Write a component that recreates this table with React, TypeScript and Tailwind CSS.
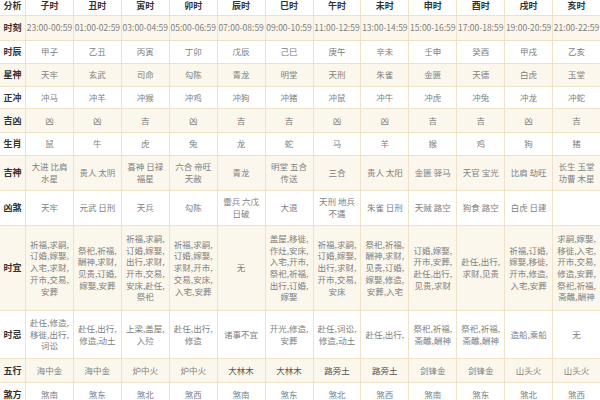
import React from "react";

const hours = ["子时", "丑时", "寅时", "卯时", "辰时", "巳时", "午时", "未时", "申时", "酉时", "戌时", "亥时"];

type Cell = string | string[];

const rows: { label: string; cells: Cell[] }[] = [
  {
    label: "时刻",
    cells: ["23:00-00:59", "01:00-02:59", "03:00-04:59", "05:00-06:59", "07:00-08:59", "09:00-10:59", "11:00-12:59", "13:00-14:59", "15:00-16:59", "17:00-18:59", "19:00-20:59", "21:00-22:59"],
  },
  { label: "时辰", cells: ["甲子", "乙丑", "丙寅", "丁卯", "戊辰", "己巳", "庚午", "辛未", "壬申", "癸酉", "甲戌", "乙亥"] },
  { label: "星神", cells: ["天牢", "玄武", "司命", "勾陈", "青龙", "明堂", "天刑", "朱雀", "金匮", "天德", "白虎", "玉堂"] },
  { label: "正冲", cells: ["冲马", "冲羊", "冲猴", "冲鸡", "冲狗", "冲猪", "冲鼠", "冲牛", "冲虎", "冲兔", "冲龙", "冲蛇"] },
  { label: "吉凶", cells: ["凶", "凶", "吉", "凶", "吉", "吉", "凶", "凶", "吉", "吉", "凶", "吉"] },
  { label: "生肖", cells: ["鼠", "牛", "虎", "兔", "龙", "蛇", "马", "羊", "猴", "鸡", "狗", "猪"] },
  {
    label: "吉神",
    cells: [
      ["大进 比肩", "水星"],
      "贵人 太阴",
      ["喜神 日禄", "福星"],
      ["六合 帝旺", "天赦"],
      "青龙",
      ["明堂 五合", "传送"],
      "三合",
      "贵人 太阳",
      "金匮 驿马",
      "天官 宝光",
      "比肩 劫旺",
      ["长生 玉堂", "功曹 木星"],
    ],
  },
  {
    label: "凶煞",
    cells: [
      "天牢",
      "元武 日刑",
      "天兵",
      "勾陈",
      ["雷兵 六戊", "日破"],
      "大退",
      ["天刑 地兵", "不遇"],
      "朱雀 日刑",
      "天贼 路空",
      "狗食 路空",
      "白虎 日建",
      "",
    ],
  },
  {
    label: "时宜",
    cells: [
      ["祈福,求嗣,", "订婚,嫁娶,", "入宅,求财,", "开市,交易,", "安葬"],
      ["祭祀,祈福,", "酬神,求财,", "见贵,订婚,", "嫁娶,安葬"],
      ["祈福,求嗣,", "订婚,嫁娶,", "出行,求财,", "开市,交易,", "安床,赴任,", "祭祀"],
      ["祈福,求嗣,", "订婚,嫁娶,", "求财,开市,", "交易,安床,", "入宅,安葬"],
      "无",
      ["盖屋,移徙,", "作灶,安床,", "入宅,开市,", "祭祀,祈福,", "出行,订婚,", "嫁娶"],
      ["祈福,求嗣,", "订婚,嫁娶,", "出行,求财,", "开市,交易,", "安床"],
      ["祭祀,祈福,", "酬神,求财,", "见贵,订婚,", "嫁娶,修造,", "安葬,入宅"],
      ["订婚,嫁娶,", "开市,安葬,", "赴任,出行,", "见贵,求财"],
      ["赴任,出行,", "求财,见贵"],
      ["祈福,订婚,", "嫁娶,移徙,", "开市,修造,", "入宅,安葬"],
      ["求嗣,嫁娶,", "移徙,入宅,", "开市,交易,", "修造,安葬,", "祭祀,祈福,", "斋醮,酬神"],
    ],
  },
  {
    label: "时忌",
    cells: [
      ["赴任,修造,", "移徙,出行,", "词讼"],
      ["赴任,出行,", "修造,动土"],
      ["上梁,盖屋,", "入殓"],
      ["赴任,出行,", "修造"],
      "诸事不宜",
      ["开光,修造,", "安葬"],
      ["赴任,词讼,", "修造,动土"],
      "赴任,出行,",
      ["祭祀,祈福,", "斋醮,酬神"],
      ["祭祀,祈福,", "斋醮,酬神"],
      "造船,乘船",
      "无",
    ],
  },
  {
    label: "五行",
    cells: ["海中金", "海中金", "炉中火", "炉中火", "大林木", "大林木", "路旁土", "路旁土", "剑锋金", "剑锋金", "山头火", "山头火"],
  },
  { label: "煞方", cells: ["煞南", "煞东", "煞北", "煞西", "煞南", "煞东", "煞北", "煞西", "煞南", "煞东", "煞北", "煞西"] },
];

const font = { fontFamily: '"Noto Sans CJK SC", "Liberation Sans", sans-serif' };

export default function App() {
  return (
    <div className="w-[600px] h-[400px] overflow-hidden bg-white" style={font}>
      <div className="mt-[-4px] grid grid-cols-[25px_repeat(12,minmax(0,1fr))] grid-rows-[19px_24px_22px_22px_21px_23px_22px_34px_34px_84px_47px_23px_24px] gap-px bg-[#eee3c6]">
        <div className="flex items-center justify-center bg-white text-[9px] font-bold text-[#333]">分析</div>
        {hours.map((h) => (
          <div key={h} className="flex items-center justify-center bg-white text-[9px] font-bold text-[#333]">
            {h}
          </div>
        ))}
        {rows.map((row, ri) => {
          const bg = ri % 2 === 0 ? "bg-[#fbf7ec]" : "bg-white";
          return (
            <React.Fragment key={row.label}>
              <div className={`flex items-center justify-center ${bg} text-[9px] font-bold text-[#333]`}>{row.label}</div>
              {row.cells.map((c, ci) => {
                const lines = Array.isArray(c) ? c : [c];
                const darker = row.label === "五行" && ci >= 4 && ci <= 7;
                return (
                  <div
                    key={ci}
                    className={`flex flex-col items-center justify-center ${bg} text-center text-[8.5px] leading-[11.7px] whitespace-nowrap ${
                      darker ? "text-[#555]" : "text-[#808080]"
                    }`}
                  >
                    {lines.map((l, li) => (
                      <div key={li}>{l}</div>
                    ))}
                  </div>
                );
              })}
            </React.Fragment>
          );
        })}
      </div>
    </div>
  );
}
